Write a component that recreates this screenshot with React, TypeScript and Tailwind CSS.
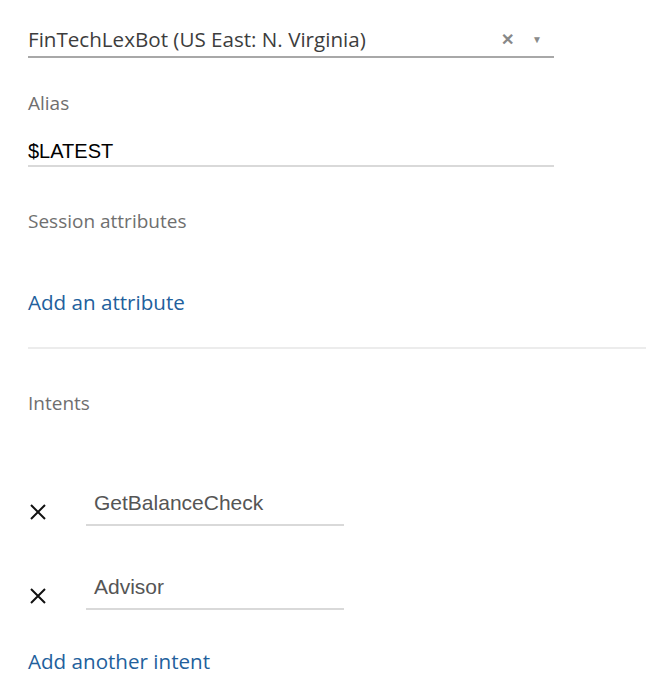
const ember = { fontFamily: "'Open Sans', 'Noto Sans', sans-serif" };
const arial = { fontFamily: "'Liberation Sans', Arial, sans-serif" };

const intents = ["GetBalanceCheck", "Advisor"];

function IntentRow({ name, first }: { name: string; first?: boolean }) {
  return (
    <div className={`flex items-end ${first ? "mt-[76px]" : "mt-[49px]"}`}>
      <button className="w-[58px] h-[28px] flex items-center" aria-label="Remove intent">
        <svg width="20" height="20" viewBox="0 0 20 20">
          <path d="M3 3 L17 17 M17 3 L3 17" stroke="#111" strokeWidth="2" />
        </svg>
      </button>
      <div
        className="w-[258px] border-b-2 border-[#d9d9d9] pl-2 pb-[9px] text-[21px] leading-[24px] text-[#555]"
        style={arial}
      >
        {name}
      </div>
    </div>
  );
}

export default function App() {
  return (
    <div className="bg-white w-[646px] h-[690px] pl-7 pt-[24px]" style={ember}>
      <div className="w-[526px] border-b-2 border-[#a8a8a8] flex items-center h-[34px] pb-[2px]">
        <span className="flex-1 text-[20.6px] leading-[30px] text-[#3d3d3d]">
          FinTechLexBot (US East: N. Virginia)
        </span>
        <span className="text-[#888] text-[16px] font-bold mr-[18px]">✕</span>
        <span className="text-[#8a8a8a] text-[10px] mr-[12px]">▼</span>
      </div>

      <div className="mt-[33px] text-[19px] leading-[24px] text-[#6f6f6f]">Alias</div>
      <div
        className="w-[526px] mt-[24px] border-b-2 border-[#d9d9d9] text-[20px] leading-[24px] text-black pb-[2px]"
        style={arial}
      >
        $LATEST
      </div>

      <div className="mt-[42px] text-[19px] leading-[24px] text-[#6f6f6f]">Session attributes</div>
      <div className="mt-[57px] text-[20.6px] leading-[24px] text-[#22609c]">Add an attribute</div>

      <div className="mt-[33px] border-t-2 border-[#ececec]" />

      <div className="mt-[42px] text-[19px] leading-[24px] text-[#6f6f6f]">Intents</div>

      {intents.map((n, i) => (
        <IntentRow key={n} name={n} first={i === 0} />
      ))}

      <div className="mt-[39px] text-[20.6px] leading-[24px] text-[#22609c]">Add another intent</div>
    </div>
  );
}
